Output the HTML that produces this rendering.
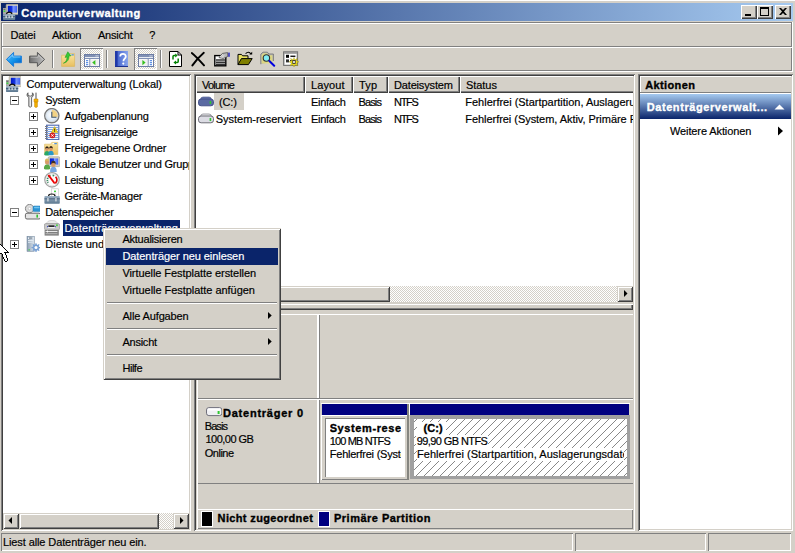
<!DOCTYPE html>
<html lang="de"><head><meta charset="utf-8"><title>Computerverwaltung</title>
<style>
html,body{margin:0;padding:0}
body{width:795px;height:553px;overflow:hidden;background:#D4D0C8;position:relative;font:11px/13px "Liberation Sans",sans-serif}
div,span.t,svg.i,i{position:absolute;display:block}
span.t{white-space:nowrap;height:13px;-webkit-text-stroke:.18px}
</style></head>
<body>
<svg width="0" height="0" style="position:absolute"><defs>
<linearGradient id="gScr" x1="0" y1="0" x2="1" y2="0"><stop offset="0" stop-color="#0018c8"/><stop offset=".45" stop-color="#1838e0"/><stop offset=".55" stop-color="#7a98ff"/><stop offset="1" stop-color="#4060f0"/></linearGradient>
<linearGradient id="gBack" x1="0" y1="0" x2="1" y2="1"><stop offset="0" stop-color="#58c0ff"/><stop offset=".55" stop-color="#1090e8"/><stop offset="1" stop-color="#0058c0"/></linearGradient>
<linearGradient id="gFwd" x1="0" y1="0" x2="1" y2="0"><stop offset="0" stop-color="#6e6e6e"/><stop offset="1" stop-color="#c0c0c0"/></linearGradient>
<linearGradient id="gFold" x1="0" y1="0" x2="0" y2="1"><stop offset="0" stop-color="#fbe5a0"/><stop offset="1" stop-color="#e8c060"/></linearGradient>
<linearGradient id="gHelp" x1="0" y1="0" x2="1" y2="0"><stop offset="0" stop-color="#3858c8"/><stop offset="1" stop-color="#88a4ec"/></linearGradient>
<linearGradient id="gBox" x1="0" y1="0" x2="0" y2="1"><stop offset="0" stop-color="#9ab0c4"/><stop offset="1" stop-color="#5c7890"/></linearGradient>
<linearGradient id="gTow" x1="0" y1="0" x2="1" y2="0"><stop offset="0" stop-color="#8ca0b4"/><stop offset="1" stop-color="#dce4ec"/></linearGradient>
<linearGradient id="gWr" x1="0" y1="0" x2="1" y2="0"><stop offset="0" stop-color="#8a8a8a"/><stop offset=".5" stop-color="#f4f4f4"/><stop offset="1" stop-color="#9a9a9a"/></linearGradient>
<radialGradient id="gClk" cx=".45" cy=".45" r=".6"><stop offset="0" stop-color="#ffffff"/><stop offset="1" stop-color="#c8dcf0"/></radialGradient>
<clipPath id="cClk"><circle cx="7.8" cy="7.7" r="5.9"/></clipPath>
</defs></svg>
<div style="left:0px;top:0px;width:795px;height:1px;background:#FFFFFF"></div>
<div style="left:1px;top:3px;width:792px;height:18px;background:linear-gradient(to right,#0A246A,#A6CAF0)"></div>
<svg class="i" style="left:2px;top:4px" width="16" height="16" viewBox="0 0 16 16"><rect x="4.2" y="0.2" width="12.6" height="10.4" rx="1" fill="#d6d2c2" stroke="#a8a494" stroke-width=".7"/><rect x="5.800000000000001" y="1.8" width="9.399999999999999" height="6.800000000000001" fill="url(#gScr)"/><rect x="1" y="4" width="3" height="6.5" fill="#a8a8a8"/><rect x="1.5" y="6.5" width="1.8" height="1.4" fill="#30e030"/><rect x="1.5" y="4.8" width="1.8" height="1" fill="#606060"/><path d="M4.5 10.3q0-2.2 2.7-2.2q2.7 0 2.7 2.2" fill="none" stroke="#101010" stroke-width="1.2"/><rect x="1" y="10.2" width="12.2" height="5.7" rx=".6" fill="url(#gBox)"/><rect x="1" y="12" width="12.2" height=".9" fill="#405872"/><rect x="3.6" y="11.6" width="1" height="2.4" fill="#fff"/><rect x="6.6" y="11.6" width="1" height="2.4" fill="#fff"/><rect x="9.6" y="11.6" width="1" height="2.4" fill="#fff"/></svg>
<span id="t1" class="t" style="left:21.3px;top:7px;color:#fff;font-weight:bold;-webkit-text-stroke:.35px;letter-spacing:0.523px;">Computerverwaltung</span>
<div style="left:741px;top:5px;width:16px;height:14px;background:#D4D0C8;box-shadow:inset 1px 1px 0 #FFFFFF,inset -1px -1px 0 #404040,inset -2px -2px 0 #808080"><i style="left:4px;top:9px;width:6px;height:2px;background:#000"></i></div>
<div style="left:757px;top:5px;width:16px;height:14px;background:#D4D0C8;box-shadow:inset 1px 1px 0 #FFFFFF,inset -1px -1px 0 #404040,inset -2px -2px 0 #808080"><i style="left:3px;top:2px;width:9px;height:9px;box-sizing:border-box;border:1px solid #000;border-top-width:2px"></i></div>
<div style="left:775px;top:5px;width:16px;height:14px;background:#D4D0C8;box-shadow:inset 1px 1px 0 #FFFFFF,inset -1px -1px 0 #404040,inset -2px -2px 0 #808080"><svg class="i" style="left:4px;top:3px" width="8" height="7" viewBox="0 0 8 7"><path d="M0 0h2l2 2l2-2h2l-3 3.5l3 3.5h-2l-2-2l-2 2h-2l3-3.5z" fill="#000"/></svg></div>
<div style="left:1px;top:22px;width:792px;height:1px;background:#808080"></div>
<div style="left:2px;top:23px;width:790px;height:1px;background:#FFFFFF"></div>
<div style="left:1px;top:22px;width:1px;height:49px;background:#808080"></div>
<div style="left:2px;top:23px;width:1px;height:48px;background:#FFFFFF"></div>
<div style="left:791px;top:22px;width:1px;height:49px;background:#808080"></div>
<div style="left:792px;top:22px;width:1px;height:50px;background:#FFFFFF"></div>
<div style="left:1px;top:46px;width:791px;height:1px;background:#808080"></div>
<div style="left:2px;top:47px;width:790px;height:1px;background:#FFFFFF"></div>
<div style="left:1px;top:70px;width:791px;height:1px;background:#808080"></div>
<div style="left:1px;top:71px;width:792px;height:1px;background:#FFFFFF"></div>
<span id="t2" class="t" style="left:10.5px;top:29px;color:#000;letter-spacing:-0.120px;">Datei</span>
<span id="t3" class="t" style="left:52px;top:29px;color:#000;letter-spacing:-0.234px;">Aktion</span>
<span id="t4" class="t" style="left:98px;top:29px;color:#000;letter-spacing:-0.229px;">Ansicht</span>
<span id="t5" class="t" style="left:149.3px;top:29px;color:#000;">?</span>
<svg class="i" style="left:6px;top:51px" width="16" height="16" viewBox="0 0 16 16"><path d="M.4 8.4L7.6 1.4V5.1H15.4V11.7H7.6V15.4Z" fill="url(#gBack)" stroke="#1c7cd8" stroke-width="1" stroke-linejoin="round"/><path d="M2.2 8.2L6.8 3.8V6H14.4" fill="none" stroke="#9ad8ff" stroke-width=".9" opacity=".8"/></svg>
<svg class="i" style="left:29px;top:51px" width="16" height="16" viewBox="0 0 16 16"><path d="M15.6 8.4L8.4 1.4V5.1H.6V11.7H8.4V15.4Z" fill="url(#gFwd)" stroke="#585858" stroke-width="1" stroke-linejoin="round"/><path d="M1.6 6.2H9.2V4L13.6 8.3" fill="none" stroke="#d8d8d8" stroke-width=".8" opacity=".7"/></svg>
<div style="left:52px;top:50px;width:1px;height:18px;background:#808080"></div>
<div style="left:53px;top:50px;width:1px;height:18px;background:#FFFFFF"></div>
<svg class="i" style="left:61px;top:51px" width="16" height="16" viewBox="0 0 16 16"><path d="M.6 4.2H8l1-1.6h4.6V15.4H.6Z" fill="url(#gFold)" stroke="#d8b458" stroke-width=".6"/><rect x="10" y="3.2" width="3" height="1.2" rx=".6" fill="#4a90e0"/><rect x="9.2" y="3.3" width="1.2" height="1" fill="#fff"/><path d="M2.4 12.2c2.6-1 3.6-3.4 3.6-6.2L4 6.4 6.8.8l3.2 4-2 .2c.2 3.4-1.6 6.4-5.6 7.2z" fill="#38c838" stroke="#189818" stroke-width=".5"/></svg>
<div style="left:80px;top:48px;width:23px;height:22px;background-image:conic-gradient(#fff 25%,#D4D0C8 0 50%,#fff 0 75%,#D4D0C8 0);background-size:2px 2px;box-shadow:inset 1px 1px 0 #808080,inset -1px -1px 0 #FFFFFF"></div>
<svg class="i" style="left:84px;top:52px" width="16" height="16" viewBox="0 0 16 16"><rect x=".5" y="2.5" width="15" height="12" fill="#fff" stroke="#6c7ca4" stroke-width="1"/><rect x="1" y="3" width="14" height="2" fill="#8090b4"/><rect x="1" y="5" width="14" height="1" fill="#e8ecf4"/><rect x="1" y="6" width="14" height="1" fill="#8090b4"/><rect x="11.6" y="3.4" width="1" height="1" fill="#fff"/><rect x="13.4" y="3.4" width="1" height="1" fill="#fff"/><rect x="5.4" y="7" width="1" height="7" fill="#6c7ca4"/><rect x="2" y="8.2" width="2.2" height="1" fill="#3878e0"/><rect x="2" y="10.2" width="2.2" height="1" fill="#3878e0"/><rect x="2" y="12.2" width="2.2" height="1" fill="#3878e0"/><rect x="6.6" y="7.4" width="8" height="6.4" fill="#f0f0f0"/><path d="M11.4 8L8.2 10.6L11.4 13.2Z" fill="#38c020"/></svg>
<div style="left:106px;top:50px;width:1px;height:18px;background:#808080"></div>
<div style="left:107px;top:50px;width:1px;height:18px;background:#FFFFFF"></div>
<svg class="i" style="left:115px;top:51px" width="16" height="16" viewBox="0 0 16 16"><rect x="0" y="0" width="13" height="16" fill="url(#gHelp)"/><rect x="0" y="0" width="2.6" height="16" fill="#2038a8"/><rect x="0" y="15" width="13" height="1" fill="#1c3090"/><path d="M5.2 5.4c0-3.4 5.6-3.4 5.6 0c0 2.2-2.4 2.4-2.4 4.8" fill="none" stroke="#fff" stroke-width="1.7"/><circle cx="8.3" cy="12.6" r="1.1" fill="#fff"/></svg>
<div style="left:134px;top:48px;width:23px;height:22px;background-image:conic-gradient(#fff 25%,#D4D0C8 0 50%,#fff 0 75%,#D4D0C8 0);background-size:2px 2px;box-shadow:inset 1px 1px 0 #808080,inset -1px -1px 0 #FFFFFF"></div>
<svg class="i" style="left:138px;top:52px" width="16" height="16" viewBox="0 0 16 16"><rect x=".5" y="2.5" width="15" height="12" fill="#fff" stroke="#6c7ca4" stroke-width="1"/><rect x="1" y="3" width="14" height="2" fill="#8090b4"/><rect x="1" y="5" width="14" height="1" fill="#e8ecf4"/><rect x="1" y="6" width="14" height="1" fill="#8090b4"/><rect x="11.6" y="3.4" width="1" height="1" fill="#fff"/><rect x="13.4" y="3.4" width="1" height="1" fill="#fff"/><rect x="9.6" y="7" width="1" height="7" fill="#6c7ca4"/><rect x="11.8" y="8.2" width="2.2" height="1" fill="#3878e0"/><rect x="11.8" y="10.2" width="2.2" height="1" fill="#3878e0"/><rect x="11.8" y="12.2" width="2.2" height="1" fill="#3878e0"/><rect x="1.4" y="7.4" width="8" height="6.4" fill="#f0f0f0"/><path d="M4.4 8L7.6 10.6L4.4 13.2Z" fill="#38c020"/></svg>
<div style="left:160px;top:50px;width:1px;height:18px;background:#808080"></div>
<div style="left:161px;top:50px;width:1px;height:18px;background:#FFFFFF"></div>
<svg class="i" style="left:168px;top:51px" width="16" height="16" viewBox="0 0 16 16"><path d="M1.5.5H10L13.5 4V15.5H1.5Z" fill="#fff" stroke="#000" stroke-width="1"/><path d="M10 .5V4H13.5" fill="none" stroke="#000" stroke-width="1"/><path d="M5 8.4V5.6Q5 4.6 6 4.6H7.4" fill="none" stroke="#008000" stroke-width="1.5"/><path d="M7.2 2.6L9.8 4.6L7.2 6.6Z" fill="#008000"/><path d="M10.2 7.6V10.4Q10.2 11.4 9.2 11.4H7.8" fill="none" stroke="#008000" stroke-width="1.5"/><path d="M8 9.4L5.4 11.4L8 13.4Z" fill="#008000"/></svg>
<svg class="i" style="left:191px;top:51px" width="16" height="16" viewBox="0 0 16 16"><path d="M.8 2Q5 5.4 13 14.4M12.8 1.8Q6 7.6 1.4 14.4" fill="none" stroke="#000" stroke-width="1.9" stroke-linecap="round"/></svg>
<svg class="i" style="left:214px;top:51px" width="16" height="16" viewBox="0 0 16 16"><rect x=".8" y="4.6" width="11" height="10.2" fill="#fff" stroke="#000" stroke-width="1.4"/><rect x="2" y="8.4" width="9" height="1.2" fill="#000"/><rect x="2" y="10.6" width="9" height="1.2" fill="#000"/><rect x="2" y="12.6" width="9" height="1.2" fill="#000"/><path d="M5 6.6L8.4 2.4L13.6 1.6L13.8 5.4L9.4 7.6Z" fill="#b8b8b8" stroke="#404040" stroke-width=".7"/><path d="M6 6L9 3.4M7.4 6.8L10.4 4.2" stroke="#fff" stroke-width=".7"/><rect x="14.4" y="1.6" width="1.2" height="4.2" fill="#0000c0"/></svg>
<svg class="i" style="left:237px;top:51px" width="16" height="16" viewBox="0 0 16 16"><path d="M1 13.6V3.4H4.4L5.6 4.8H11V7.4" fill="#e8e060" stroke="#000" stroke-width="1"/><path d="M1 13.6L4.4 7.6H15.2L11.4 13.6Z" fill="#808000" stroke="#000" stroke-width="1" stroke-linejoin="round"/><path d="M8.6 2.6Q11.6 -.4 14 3" fill="none" stroke="#000" stroke-width="1.1"/><path d="M12.4 3.6H15.2V.8Z" fill="#000"/></svg>
<svg class="i" style="left:260px;top:51px" width="16" height="16" viewBox="0 0 16 16"><path d="M.8 13.2V3.2L3 1.2H7.4L9 3H13.4V10" fill="#b8b8b8" stroke="#707070" stroke-width=".8"/><path d="M1.6 12.6V4L3.4 2.2H6.8L8.4 4.2H12.4V12.6Z" fill="#e8e070" opacity=".75"/><circle cx="6.4" cy="7" r="3.2" fill="#80ecf4" stroke="#303030" stroke-width="1.1"/><path d="M9.4 10L14.2 14.8" stroke="#0000e0" stroke-width="2" stroke-linecap="round"/></svg>
<svg class="i" style="left:283px;top:51px" width="16" height="16" viewBox="0 0 16 16"><rect x=".6" y=".8" width="14" height="13.6" fill="#d0d0d0" stroke="#707070" stroke-width="1"/><rect x="1" y="1.2" width="13.2" height="1.4" fill="#909090"/><rect x="2" y="3" width="11.2" height="10.4" fill="#fff"/><rect x="3" y="3.8" width="3" height="3" fill="#000"/><rect x="7.4" y="4.6" width="5" height="1.3" fill="#000"/><rect x="3" y="8.4" width="3" height="3" fill="#303030"/><rect x="7" y="9" width="3" height="1.2" fill="#303030"/><path d="M11 6.4L11.8 9L14.4 7.4L13.4 10L16 10.8L13.6 12L14.8 14.8L12 13.6L11 16L10 13.6L7.2 14.8L8.4 12L6 10.8L8.6 10L7.6 7.4L10.2 9Z" fill="#f4e410" stroke="#8c8000" stroke-width=".35"/><rect x="9.8" y="9.4" width="2.4" height="3" fill="#fff" stroke="#202020" stroke-width=".8"/></svg>
<div style="left:1px;top:74px;width:190px;height:457px;background:#FFFFFF;box-shadow:inset 1px 1px 0 #808080,inset -1px -1px 0 #FFFFFF,inset 2px 2px 0 #404040,inset -2px -2px 0 #D4D0C8"></div>
<svg class="i" style="left:5px;top:76px" width="16" height="16" viewBox="0 0 16 16"><rect x="4.2" y="0.2" width="12.6" height="10.4" rx="1" fill="#d6d2c2" stroke="#a8a494" stroke-width=".7"/><rect x="5.800000000000001" y="1.8" width="9.399999999999999" height="6.800000000000001" fill="url(#gScr)"/><rect x="1" y="4" width="3" height="6.5" fill="#a8a8a8"/><rect x="1.5" y="6.5" width="1.8" height="1.4" fill="#30e030"/><rect x="1.5" y="4.8" width="1.8" height="1" fill="#606060"/><path d="M4.5 10.3q0-2.2 2.7-2.2q2.7 0 2.7 2.2" fill="none" stroke="#101010" stroke-width="1.2"/><rect x="1" y="10.2" width="12.2" height="5.7" rx=".6" fill="url(#gBox)"/><rect x="1" y="12" width="12.2" height=".9" fill="#405872"/><rect x="3.6" y="11.6" width="1" height="2.4" fill="#fff"/><rect x="6.6" y="11.6" width="1" height="2.4" fill="#fff"/><rect x="9.6" y="11.6" width="1" height="2.4" fill="#fff"/></svg>
<span id="t6" class="t" style="left:26.4px;top:78px;color:#000;letter-spacing:-0.107px;">Computerverwaltung (Lokal)</span>
<div style="left:10px;top:96px;width:9px;height:9px;box-sizing:border-box;border:1px solid #808080;background:#fff"><i style="left:1px;top:3px;width:5px;height:1px;background:#000"></i></div>
<svg class="i" style="left:24px;top:92px" width="16" height="16" viewBox="0 0 16 16"><path transform="translate(.8 0)" d="M3.2.8C1.6 2 2 4.6 4 5.4V14.4Q5.4 16 6.8 14.4V5.4C8.8 4.6 9.2 2 7.6.8V3.4L5.4 4.2L3.2 3.4Z" fill="url(#gWr)" stroke="#5c5c5c" stroke-width=".9"/><rect x="11.4" y=".6" width="1.2" height="6.8" fill="#707070"/><path d="M10 7H14V9.6L13.4 10.4V14.8Q12 16.4 10.6 14.8V10.4L10 9.6Z" fill="#f4b000" stroke="#c08000" stroke-width=".5"/><rect x="10.4" y="9.6" width="3.2" height=".8" fill="#c88800"/></svg>
<span id="t7" class="t" style="left:45.3px;top:94px;color:#000;letter-spacing:-0.315px;">System</span>
<div style="left:29px;top:112px;width:9px;height:9px;box-sizing:border-box;border:1px solid #808080;background:#fff"><i style="left:1px;top:3px;width:5px;height:1px;background:#000"></i><i style="left:3px;top:1px;width:1px;height:5px;background:#000"></i></div>
<svg class="i" style="left:44px;top:108px" width="16" height="16" viewBox="0 0 16 16"><circle cx="7.8" cy="7.7" r="7.1" fill="url(#gClk)" stroke="#787878" stroke-width="1.4"/><circle cx="7.8" cy="7.7" r="6" fill="none" stroke="#d4d8dc" stroke-width=".7"/><path d="M7.8 9.2V-2H20V9.2Z" fill="#f2d284" clip-path="url(#cClk)"/><path d="M7.8 3.8V9.2H12.4" fill="none" stroke="#3c5470" stroke-width="1.1"/></svg>
<span id="t8" class="t" style="left:64.5px;top:110px;color:#000;letter-spacing:-0.132px;">Aufgabenplanung</span>
<div style="left:29px;top:128px;width:9px;height:9px;box-sizing:border-box;border:1px solid #808080;background:#fff"><i style="left:1px;top:3px;width:5px;height:1px;background:#000"></i><i style="left:3px;top:1px;width:1px;height:5px;background:#000"></i></div>
<svg class="i" style="left:44px;top:124px" width="16" height="16" viewBox="0 0 16 16"><rect x="2.6" y="1.2" width="12.2" height="14.4" fill="#f4f8ff" stroke="#4c68b0" stroke-width="1.1"/><path d="M3.4 3.5H14.2M3.4 5.5H14.2M3.4 7.5H14.2M3.4 9.5H14.2M3.4 11.5H14.2M3.4 13.5H14.2" stroke="#7ca4e4" stroke-width="1"/><path d="M1 2.5H3.8M1 4.5H3.8M1 6.5H3.8M1 8.5H3.8M1 10.5H3.8M1 12.5H3.8M1 14.5H3.8" stroke="#787880" stroke-width="1"/><path d="M10.6 2.6L13.8 8.6H7.4Z" fill="#f8d820" stroke="#c8a000" stroke-width=".5"/><rect x="10.2" y="4.6" width=".9" height="2.2" fill="#202020"/><rect x="10.2" y="7.2" width=".9" height=".8" fill="#202020"/><circle cx="8.4" cy="11.4" r="2.7" fill="#e02020" stroke="#a81010" stroke-width=".4"/><path d="M7.2 10.2L9.6 12.6M9.6 10.2L7.2 12.6" stroke="#fff" stroke-width=".9"/></svg>
<span id="t9" class="t" style="left:64.5px;top:126px;color:#000;letter-spacing:-0.355px;">Ereignisanzeige</span>
<div style="left:29px;top:144px;width:9px;height:9px;box-sizing:border-box;border:1px solid #808080;background:#fff"><i style="left:1px;top:3px;width:5px;height:1px;background:#000"></i><i style="left:3px;top:1px;width:1px;height:5px;background:#000"></i></div>
<svg class="i" style="left:44px;top:140px" width="16" height="16" viewBox="0 0 16 16"><path d="M.6 4.2H6.6L7.8 2.4H13.8V14.6H.6Z" fill="url(#gFold)" stroke="#dcb860" stroke-width=".6"/><rect x="10" y="3" width="3" height="1.2" rx=".6" fill="#4a90e0"/><rect x="8.6" y="3" width="1.6" height="1.1" fill="#fff"/><path d="M0.2799999999999998 15.04Q0.2799999999999998 10.96 3 10.96Q5.720000000000001 10.96 5.720000000000001 15.04Q3 16.06 0.2799999999999998 15.04Z" fill="#28a868"/><ellipse cx="3" cy="9.09" rx="1.785" ry="2.21" fill="#d89a68"/><path d="M1.13 8.75Q1.3 6.2 3 6.2Q4.87 6.2 4.87 8.75Q3 7.390000000000001 1.13 8.75Z" fill="#282018"/><path d="M4.279999999999999 14.84Q4.279999999999999 10.76 7 10.76Q9.72 10.76 9.72 14.84Q7 15.86 4.279999999999999 14.84Z" fill="#2898c8"/><ellipse cx="7" cy="8.89" rx="1.785" ry="2.21" fill="#d89a68"/><path d="M5.13 8.55Q5.3 6 7 6Q8.870000000000001 6 8.870000000000001 8.55Q7 7.1899999999999995 5.13 8.55Z" fill="#282018"/></svg>
<span id="t10" class="t" style="left:64.5px;top:142px;color:#000;letter-spacing:-0.182px;">Freigegebene Ordner</span>
<div style="left:29px;top:160px;width:9px;height:9px;box-sizing:border-box;border:1px solid #808080;background:#fff"><i style="left:1px;top:3px;width:5px;height:1px;background:#000"></i><i style="left:3px;top:1px;width:1px;height:5px;background:#000"></i></div>
<svg class="i" style="left:44px;top:156px" width="16" height="16" viewBox="0 0 16 16"><rect x="4.2" y="0.8" width="11.6" height="9.8" rx="1" fill="#d6d2c2" stroke="#a8a494" stroke-width=".7"/><rect x="5.800000000000001" y="2.4000000000000004" width="8.399999999999999" height="6.200000000000001" fill="url(#gScr)"/><path d="M-0.20000000000000018 13.0Q-0.20000000000000018 8.2 3 8.2Q6.2 8.2 6.2 13.0Q3 14.2 -0.20000000000000018 13.0Z" fill="#58a848"/><ellipse cx="3" cy="6.0" rx="2.1" ry="2.6" fill="#d89a68"/><path d="M0.7999999999999998 5.6Q1.0 2.6 3 2.6Q5.2 2.6 5.2 5.6Q3 4.0 0.7999999999999998 5.6Z" fill="#d8b860"/><path d="M6.04 15.720000000000002Q6.04 10.68 9.4 10.68Q12.760000000000002 10.68 12.760000000000002 15.720000000000002Q9.4 16.98 6.04 15.720000000000002Z" fill="#78a8e0"/><ellipse cx="9.4" cy="8.37" rx="2.205" ry="2.7300000000000004" fill="#d89a68"/><path d="M7.09 7.95Q7.300000000000001 4.8 9.4 4.8Q11.71 4.8 11.71 7.95Q9.4 6.27 7.09 7.95Z" fill="#403020"/></svg>
<span id="t11" class="t" style="left:64.5px;top:158px;color:#000;letter-spacing:-0.203px;width:124px;overflow:hidden;">Lokale Benutzer und Gruppen</span>
<div style="left:29px;top:176px;width:9px;height:9px;box-sizing:border-box;border:1px solid #808080;background:#fff"><i style="left:1px;top:3px;width:5px;height:1px;background:#000"></i><i style="left:3px;top:1px;width:1px;height:5px;background:#000"></i></div>
<svg class="i" style="left:44px;top:172px" width="16" height="16" viewBox="0 0 16 16"><circle cx="8" cy="7.8" r="7.2" fill="#fcfcfc" stroke="#a4a4a4" stroke-width="1.3"/><circle cx="8" cy="7.8" r="6" fill="none" stroke="#e0e0e0" stroke-width=".8"/><path d="M4.2 10.8A4.8 4.8 0 0 1 6.6 3.6" fill="none" stroke="#3c8c64" stroke-width="1.6" stroke-dasharray="1.1 .8"/><path d="M8.6 3.4A4.8 4.8 0 0 1 10.2 3.8" fill="none" stroke="#3c8c64" stroke-width="1.6"/><path d="M11.6 4.8A4.8 4.8 0 0 1 11.8 10.8L9.6 11" fill="none" stroke="#e00000" stroke-width="1.6"/><path d="M4.4 3L10.2 10.8" stroke="#f00000" stroke-width="1.9"/></svg>
<span id="t12" class="t" style="left:64.5px;top:174px;color:#000;letter-spacing:-0.327px;">Leistung</span>
<svg class="i" style="left:44px;top:188px" width="16" height="16" viewBox="0 0 16 16"><rect x="7.6" y=".8" width="6.8" height="7.6" fill="#fff" stroke="#c4c4c4" stroke-width=".6"/><rect x="10" y="2.4" width="2" height="1.8" rx=".6" fill="#40d040"/><rect x="10" y="4.2" width="2.2" height="4" fill="#e4e4e4"/><path d="M4.6 8q0-2 3.2-2q3.2 0 3.2 2" fill="none" stroke="#101010" stroke-width="1.2"/><rect x=".4" y="8" width="15.4" height="7.8" rx=".8" fill="url(#gBox)"/><rect x=".4" y="10.4" width="15.4" height=".9" fill="#48607a"/><rect x="3.4" y="10" width="1.1" height="3.4" fill="#f0f0f0"/><rect x="11.4" y="10" width="1.1" height="3.4" fill="#f0f0f0"/></svg>
<span id="t13" class="t" style="left:64.5px;top:190px;color:#000;letter-spacing:-0.208px;">Geräte-Manager</span>
<div style="left:10px;top:208px;width:9px;height:9px;box-sizing:border-box;border:1px solid #808080;background:#fff"><i style="left:1px;top:3px;width:5px;height:1px;background:#000"></i></div>
<svg class="i" style="left:24px;top:204px" width="16" height="16" viewBox="0 0 16 16"><circle cx="5.6" cy="4.6" r="4.2" fill="#dcdcdc" stroke="#7c7c7c" stroke-width=".9"/><circle cx="5.6" cy="4.6" r="1.3" fill="#fff" stroke="#a8a8a8" stroke-width=".5"/><rect x="9" y="2" width="7.6" height="5.6" rx="1.2" fill="#2c94d4" stroke="#1c78b4" stroke-width=".5"/><rect x="10" y="2.8" width="5.6" height="1.4" rx=".6" fill="#70c4f0"/><rect x="1.4" y="9.2" width="15.2" height="5.8" rx="1.6" fill="#e4e4e4" stroke="#686868" stroke-width="1"/><rect x="12.4" y="10.6" width="1.6" height="3" fill="#30c030"/></svg>
<span id="t14" class="t" style="left:45.3px;top:206px;color:#000;letter-spacing:-0.194px;">Datenspeicher</span>
<svg class="i" style="left:44px;top:220px" width="16" height="16" viewBox="0 0 16 16"><path d="M2.4 4Q3 .4 8 .4Q13 .4 13.6 4Z" fill="#ececec" stroke="#b4b4b4" stroke-width=".5"/><rect x=".4" y="3.6" width="15.2" height="6.2" rx="1.4" fill="#c8c8c8" stroke="#8c8c8c" stroke-width=".6"/><rect x="4.4" y="5.4" width="6" height="1.5" fill="#181818"/><rect x="3.6" y="7" width="7.6" height=".9" fill="#f4f4f4"/><rect x="12.2" y="4.4" width="1.5" height="1.8" fill="#30d030"/><rect x="3" y="6.2" width="1" height="1" fill="#2030c0"/><rect x="10.8" y="6.2" width="1" height="1" fill="#2030c0"/><rect x=".6" y="10" width="14.2" height="5.6" fill="#808080"/><rect x="1.6" y="11" width="11.8" height="1" fill="#e8e8e8"/><rect x="1.6" y="13.2" width="11.8" height="1" fill="#b8b8b8"/><rect x="3" y="10.6" width="1" height="1.8" fill="#fff"/></svg>
<div style="left:63px;top:220px;width:117px;height:16px;background:#0A246A"></div>
<span id="t15" class="t" style="left:64.5px;top:222px;color:#fff;letter-spacing:0.106px;">Datenträgerverwaltung</span>
<div style="left:10px;top:240px;width:9px;height:9px;box-sizing:border-box;border:1px solid #808080;background:#fff"><i style="left:1px;top:3px;width:5px;height:1px;background:#000"></i><i style="left:3px;top:1px;width:1px;height:5px;background:#000"></i></div>
<svg class="i" style="left:24px;top:236px" width="16" height="16" viewBox="0 0 16 16"><rect x="3" y=".2" width="7.4" height="15.2" fill="url(#gTow)" stroke="#6c8098" stroke-width=".5"/><rect x="4" y="1.4" width="5.4" height="1.6" fill="#e8f0f8"/><rect x="5" y="1.7" width="3.4" height=".7" fill="#283848"/><rect x="4" y="4" width="5.4" height="1.2" fill="#e0e8f0"/><rect x="4" y="6" width="5.4" height="1" fill="#d0dce8"/><rect x="4.4" y="13.4" width="1.6" height="1" fill="#40d040"/><polygon points="16.47,11.11 16.47,12.09 14.98,12.46 14.72,13.09 15.51,14.41 14.81,15.11 13.49,14.32 12.86,14.58 12.49,16.07 11.51,16.07 11.14,14.58 10.51,14.32 9.19,15.11 8.49,14.41 9.28,13.09 9.02,12.46 7.53,12.09 7.53,11.11 9.02,10.74 9.28,10.11 8.49,8.79 9.19,8.09 10.51,8.88 11.14,8.62 11.51,7.13 12.49,7.13 12.86,8.62 13.49,8.88 14.81,8.09 15.51,8.79 14.72,10.11 14.98,10.74" fill="#78a0d4"/><circle cx="12" cy="11.6" r="1.5" fill="#fff"/></svg>
<span id="t16" class="t" style="left:45.3px;top:238px;color:#000;">Dienste und Anwendungen</span>
<div style="left:3px;top:513px;width:186px;height:16px;background-image:conic-gradient(#fff 25%,#D4D0C8 0 50%,#fff 0 75%,#D4D0C8 0);background-size:2px 2px;"></div>
<div style="left:3px;top:513px;width:16px;height:16px;background:#D4D0C8;box-shadow:inset 1px 1px 0 #D4D0C8,inset -1px -1px 0 #404040,inset 2px 2px 0 #FFFFFF,inset -2px -2px 0 #808080"><svg class="i" style="left:0;top:0" width="16" height="16"><polygon points="9,4 9,11 5.5,7.5" fill="#000"/></svg></div>
<div style="left:173px;top:513px;width:16px;height:16px;background:#D4D0C8;box-shadow:inset 1px 1px 0 #D4D0C8,inset -1px -1px 0 #404040,inset 2px 2px 0 #FFFFFF,inset -2px -2px 0 #808080"><svg class="i" style="left:0;top:0" width="16" height="16"><polygon points="7,4 7,11 10.5,7.5" fill="#000"/></svg></div>
<div style="left:19px;top:513px;width:140px;height:16px;background:#D4D0C8;box-shadow:inset 1px 1px 0 #D4D0C8,inset -1px -1px 0 #404040,inset 2px 2px 0 #FFFFFF,inset -2px -2px 0 #808080"></div>
<div style="left:194px;top:74px;width:441px;height:457px;background:#D4D0C8;box-shadow:inset 1px 1px 0 #808080,inset -1px -1px 0 #FFFFFF,inset 2px 2px 0 #404040,inset -2px -2px 0 #D4D0C8"></div>
<div style="left:196px;top:76px;width:437px;height:226px;background:#fff"></div>
<div style="left:196px;top:76px;width:109px;height:17px;background:#D4D0C8;box-shadow:inset 1px 1px 0 #FFFFFF,inset -1px -1px 0 #404040,inset -2px -2px 0 #808080"></div>
<span id="t17" class="t" style="left:202px;top:79px;color:#000;letter-spacing:-0.758px;">Volume</span>
<div style="left:305px;top:76px;width:48px;height:17px;background:#D4D0C8;box-shadow:inset 1px 1px 0 #FFFFFF,inset -1px -1px 0 #404040,inset -2px -2px 0 #808080"></div>
<span id="t18" class="t" style="left:311px;top:79px;color:#000;letter-spacing:0.095px;">Layout</span>
<div style="left:353px;top:76px;width:35px;height:17px;background:#D4D0C8;box-shadow:inset 1px 1px 0 #FFFFFF,inset -1px -1px 0 #404040,inset -2px -2px 0 #808080"></div>
<span id="t19" class="t" style="left:359px;top:79px;color:#000;letter-spacing:0.135px;">Typ</span>
<div style="left:388px;top:76px;width:72px;height:17px;background:#D4D0C8;box-shadow:inset 1px 1px 0 #FFFFFF,inset -1px -1px 0 #404040,inset -2px -2px 0 #808080"></div>
<span id="t20" class="t" style="left:394px;top:79px;color:#000;letter-spacing:-0.162px;">Dateisystem</span>
<div style="left:460px;top:76px;width:173px;height:17px;background:#D4D0C8;box-shadow:inset 1px 1px 0 #FFFFFF,inset 0 -1px 0 #404040,inset 0 -2px 0 #808080"></div>
<span id="t21" class="t" style="left:466px;top:79px;color:#000;letter-spacing:-0.057px;">Status</span>
<div style="left:214px;top:93px;width:30px;height:17px;background:#D4D0C8"></div>
<svg class="i" style="left:198px;top:94px" width="16" height="16" viewBox="0 0 16 16"><path d="M2.4 5.4Q3 3 5 3H11Q13 3 13.6 5.4Z" fill="#6a7ab0" stroke="#3e4c84" stroke-width=".6"/><rect x=".5" y="5" width="15" height="6.8" rx="2.6" fill="#5a6aa2" stroke="#3e4c84" stroke-width=".9"/><rect x="11.6" y="7" width="1.6" height="3" fill="#30c830"/></svg>
<span id="t22" class="t" style="left:219px;top:96px;color:#000;letter-spacing:-0.142px;">(C:)</span>
<svg class="i" style="left:198px;top:111px" width="16" height="16" viewBox="0 0 16 16"><path d="M2.4 5.4Q3 3 5 3H11Q13 3 13.6 5.4Z" fill="#f0f0f4" stroke="#60606a" stroke-width=".6"/><rect x=".5" y="5" width="15" height="6.8" rx="2.6" fill="#dcdce4" stroke="#60606a" stroke-width=".9"/><rect x="11.6" y="7" width="1.6" height="3" fill="#30c830"/></svg>
<span id="t23" class="t" style="left:215.8px;top:113px;color:#000;letter-spacing:-0.024px;">System-reserviert</span>
<span id="t24" class="t" style="left:311px;top:96px;color:#000;letter-spacing:-0.298px;">Einfach</span>
<span id="t25" class="t" style="left:358.4px;top:96px;color:#000;letter-spacing:-0.850px;">Basis</span>
<span id="t26" class="t" style="left:394px;top:96px;color:#000;letter-spacing:-1.306px;">NTFS</span>
<span id="t27" class="t" style="left:311px;top:113px;color:#000;letter-spacing:-0.298px;">Einfach</span>
<span id="t28" class="t" style="left:358.4px;top:113px;color:#000;letter-spacing:-0.850px;">Basis</span>
<span id="t29" class="t" style="left:394px;top:113px;color:#000;letter-spacing:-1.306px;">NTFS</span>
<span id="t30" class="t" style="left:465.3px;top:96px;color:#000;letter-spacing:-0.016px;width:167.7px;overflow:hidden;">Fehlerfrei (Startpartition, Auslagerungsdatei, Absturzabbild, Primäre Partition)</span>
<span id="t31" class="t" style="left:465.3px;top:113px;color:#000;letter-spacing:-0.049px;width:167.7px;overflow:hidden;">Fehlerfrei (System, Aktiv, Primäre Partition)</span>
<div style="left:196px;top:286px;width:437px;height:16px;background-image:conic-gradient(#fff 25%,#D4D0C8 0 50%,#fff 0 75%,#D4D0C8 0);background-size:2px 2px;"></div>
<div style="left:196px;top:286px;width:16px;height:16px;background:#D4D0C8;box-shadow:inset 1px 1px 0 #D4D0C8,inset -1px -1px 0 #404040,inset 2px 2px 0 #FFFFFF,inset -2px -2px 0 #808080"><svg class="i" style="left:0;top:0" width="16" height="16"><polygon points="9,4 9,11 5.5,7.5" fill="#000"/></svg></div>
<div style="left:617px;top:286px;width:16px;height:16px;background:#D4D0C8;box-shadow:inset 1px 1px 0 #D4D0C8,inset -1px -1px 0 #404040,inset 2px 2px 0 #FFFFFF,inset -2px -2px 0 #808080"><svg class="i" style="left:0;top:0" width="16" height="16"><polygon points="7,4 7,11 10.5,7.5" fill="#000"/></svg></div>
<div style="left:212px;top:286px;width:178px;height:16px;background:#D4D0C8;box-shadow:inset 1px 1px 0 #D4D0C8,inset -1px -1px 0 #404040,inset 2px 2px 0 #FFFFFF,inset -2px -2px 0 #808080"></div>
<div style="left:196px;top:304px;width:437px;height:6px;background:#D4D0C8;box-shadow:inset 0 1px 0 #FFFFFF,inset -1px -1px 0 #404040,inset -2px -2px 0 #808080"></div>
<div style="left:197px;top:314px;width:436px;height:1px;background:#FFFFFF"></div>
<div style="left:197px;top:314px;width:1px;height:215px;background:#FFFFFF"></div>
<div style="left:317px;top:315px;width:2px;height:169px;background:#FFFFFF"></div>
<div style="left:319px;top:315px;width:1px;height:169px;background:#808080"></div>
<div style="left:198px;top:398px;width:435px;height:1px;background:#808080"></div>
<div style="left:198px;top:399px;width:435px;height:1px;background:#FFFFFF"></div>
<div style="left:198px;top:483px;width:435px;height:1px;background:#808080"></div>
<svg class="i" style="left:206px;top:404px" width="16" height="16" viewBox="0 0 16 16"><rect x=".5" y="3.6" width="15.4" height="8" rx="2.4" fill="#f0f0f4" stroke="#70707c" stroke-width="1"/><rect x="1.6" y="4.6" width="13" height="2" rx="1" fill="#fff"/><rect x="11.6" y="7" width="2" height="3" fill="#30c830"/></svg>
<span id="t32" class="t" style="left:223px;top:407px;color:#000;font-weight:bold;-webkit-text-stroke:.35px;letter-spacing:0.765px;">Datenträger 0</span>
<span id="t33" class="t" style="left:204.8px;top:420px;color:#000;letter-spacing:-0.950px;">Basis</span>
<span id="t34" class="t" style="left:205.5px;top:433px;color:#000;letter-spacing:-0.524px;">100,00 GB</span>
<span id="t35" class="t" style="left:204.8px;top:447px;color:#000;letter-spacing:-0.499px;">Online</span>
<div style="left:321px;top:403px;width:309px;height:1px;background:#FFFFFF"></div>
<div style="left:322px;top:404px;width:85px;height:11px;background:#000080"></div>
<div style="left:321px;top:415px;width:87px;height:65px;background:#D4D0C8;box-shadow:inset 1px 1px 0 #FFFFFF,inset -1px -1px 0 #808080"></div>
<div style="left:325px;top:418px;width:80px;height:59px;background:#fff;box-shadow:inset 1px 1px 0 #808080,inset -1px -1px 0 #FFFFFF"></div>
<span id="t36" class="t" style="left:329.7px;top:422px;color:#000;font-weight:bold;-webkit-text-stroke:.35px;letter-spacing:0.597px;width:71.80000000000001px;overflow:hidden;">System-reserviert</span>
<span id="t37" class="t" style="left:329.8px;top:435px;color:#000;letter-spacing:-0.868px;">100 MB NTFS</span>
<span id="t38" class="t" style="left:329.8px;top:448px;color:#000;letter-spacing:-0.244px;width:71.69999999999999px;overflow:hidden;">Fehlerfrei (System, Aktiv, Primäre Partition)</span>
<div style="left:407px;top:404px;width:2px;height:76px;background:#858580"></div>
<div style="left:409px;top:404px;width:1px;height:11px;background:#FFFFFF"></div>
<div style="left:410px;top:404px;width:219px;height:11px;background:#000080"></div>
<div style="left:410px;top:415px;width:220px;height:64px;background:#A0A0A0"></div>
<div style="left:414px;top:419px;width:213px;height:57px;background:#fff"></div>
<svg class="i" style="left:414px;top:419px" width="213" height="57" shape-rendering="crispEdges"><defs><pattern id="hatch" width="8" height="8" patternUnits="userSpaceOnUse" x="3" y="0"><rect x="7" y="0" width="1" height="1" fill="#888888"/><rect x="6" y="1" width="1" height="1" fill="#888888"/><rect x="5" y="2" width="1" height="1" fill="#888888"/><rect x="4" y="3" width="1" height="1" fill="#888888"/><rect x="3" y="4" width="1" height="1" fill="#888888"/><rect x="2" y="5" width="1" height="1" fill="#888888"/><rect x="1" y="6" width="1" height="1" fill="#888888"/><rect x="0" y="7" width="1" height="1" fill="#888888"/></pattern></defs><rect width="213" height="57" fill="url(#hatch)"/></svg>
<span id="t39" class="t" style="left:423.6px;top:422px;color:#000;font-weight:bold;-webkit-text-stroke:.35px;letter-spacing:0.022px;background:#fff;padding:0 3px 0 7px;margin-left:-7px;">(C:)</span>
<span id="t40" class="t" style="left:416.8px;top:435px;color:#000;letter-spacing:-0.596px;background:#fff;padding:0 1px 0 1px;margin-left:-1px;">99,90 GB NTFS</span>
<span id="t41" class="t" style="left:417px;top:448px;color:#000;letter-spacing:0.045px;width:206.5px;overflow:hidden;background:#fff;">Fehlerfrei (Startpartition, Auslagerungsdatei, Absturzabbild, Primäre Partition)</span>
<div style="left:198px;top:509px;width:435px;height:20px;box-shadow:inset 0 1px 0 #FFFFFF,inset -1px -1px 0 #808080"></div>
<div style="left:202px;top:512px;width:10px;height:14px;background:#000;box-shadow:0 0 0 1px #fff"></div>
<span id="t42" class="t" style="left:217.6px;top:512px;color:#000;font-weight:bold;-webkit-text-stroke:.35px;letter-spacing:0.358px;">Nicht zugeordnet</span>
<div style="left:319px;top:512px;width:10px;height:14px;background:#000080;box-shadow:0 0 0 1px #fff"></div>
<span id="t43" class="t" style="left:334px;top:512px;color:#000;font-weight:bold;-webkit-text-stroke:.35px;letter-spacing:0.485px;">Primäre Partition</span>
<div style="left:638px;top:74px;width:155px;height:457px;background:#FFFFFF;box-shadow:inset 1px 1px 0 #808080,inset -1px -1px 0 #FFFFFF,inset 2px 2px 0 #404040,inset -2px -2px 0 #D4D0C8"></div>
<div style="left:640px;top:76px;width:151px;height:16px;background:#D4D0C8;box-shadow:inset 1px 1px 0 #FFFFFF"></div>
<div style="left:640px;top:92px;width:151px;height:1px;background:#808080"></div>
<div style="left:640px;top:93px;width:151px;height:1px;background:#FFFFFF"></div>
<span id="t44" class="t" style="left:645.3px;top:79px;color:#000;font-weight:bold;-webkit-text-stroke:.35px;letter-spacing:0.363px;">Aktionen</span>
<div style="left:640px;top:94px;width:151px;height:25px;background:linear-gradient(to bottom,#A6CAF0,#0A246A)"></div>
<span id="t45" class="t" style="left:646.7px;top:101px;color:#fff;font-weight:bold;-webkit-text-stroke:.35px;letter-spacing:0.579px;">Datenträgerverwalt...</span>
<svg class="i" style="left:774px;top:104px" width="11" height="6"><polygon points="0.5,5.5 5.5,0.5 10.5,5.5" fill="#fff"/></svg>
<span id="t46" class="t" style="left:670px;top:125px;color:#000;letter-spacing:-0.111px;">Weitere Aktionen</span>
<svg class="i" style="left:778px;top:126px" width="6" height="10"><polygon points="0,0.5 0,9.5 5,5" fill="#000"/></svg>
<div style="left:1px;top:533px;width:572px;height:18px;box-shadow:inset 1px 1px 0 #808080,inset -1px -1px 0 #FFFFFF"></div>
<div style="left:575px;top:533px;width:131px;height:18px;box-shadow:inset 1px 1px 0 #808080,inset -1px -1px 0 #FFFFFF"></div>
<div style="left:708px;top:533px;width:83px;height:18px;box-shadow:inset 1px 1px 0 #808080,inset -1px -1px 0 #FFFFFF"></div>
<span id="t47" class="t" style="left:3px;top:536px;color:#000;letter-spacing:-0.105px;">Liest alle Datenträger neu ein.</span>
<div style="left:103px;top:228px;width:178px;height:152px;background:#D4D0C8;box-shadow:inset 1px 1px 0 #D4D0C8,inset -1px -1px 0 #404040,inset 2px 2px 0 #FFFFFF,inset -2px -2px 0 #808080"></div>
<span id="t48" class="t" style="left:122.4px;top:233px;color:#000;letter-spacing:-0.223px;">Aktualisieren</span>
<div style="left:106px;top:248px;width:172px;height:17px;background:#0A246A"></div>
<span id="t49" class="t" style="left:122.4px;top:250px;color:#fff;letter-spacing:-0.071px;">Datenträger neu einlesen</span>
<span id="t50" class="t" style="left:122.4px;top:267px;color:#000;letter-spacing:-0.063px;">Virtuelle Festplatte erstellen</span>
<span id="t51" class="t" style="left:122.4px;top:284px;color:#000;letter-spacing:-0.045px;">Virtuelle Festplatte anfügen</span>
<span id="t52" class="t" style="left:122.4px;top:310px;color:#000;letter-spacing:-0.133px;">Alle Aufgaben</span>
<svg class="i" style="left:268px;top:312px" width="5" height="8"><polygon points="0,0 0,7 3.7,3.5" fill="#000"/></svg>
<span id="t53" class="t" style="left:122.4px;top:336px;color:#000;letter-spacing:-0.229px;">Ansicht</span>
<svg class="i" style="left:268px;top:338px" width="5" height="8"><polygon points="0,0 0,7 3.7,3.5" fill="#000"/></svg>
<span id="t54" class="t" style="left:122.4px;top:362px;color:#000;letter-spacing:-0.451px;">Hilfe</span>
<div style="left:107px;top:302px;width:170px;height:1px;background:#808080"></div>
<div style="left:107px;top:303px;width:170px;height:1px;background:#FFFFFF"></div>
<div style="left:107px;top:328px;width:170px;height:1px;background:#808080"></div>
<div style="left:107px;top:329px;width:170px;height:1px;background:#FFFFFF"></div>
<div style="left:107px;top:354px;width:170px;height:1px;background:#808080"></div>
<div style="left:107px;top:355px;width:170px;height:1px;background:#FFFFFF"></div>
<svg class="i" style="left:-4px;top:240px" width="14" height="22" shape-rendering="crispEdges"><rect x="0" y="0" width="1" height="1" fill="#000"/><rect x="0" y="1" width="1" height="1" fill="#000"/><rect x="1" y="1" width="1" height="1" fill="#000"/><rect x="0" y="2" width="1" height="1" fill="#000"/><rect x="1" y="2" width="1" height="1" fill="#fff"/><rect x="2" y="2" width="1" height="1" fill="#000"/><rect x="0" y="3" width="1" height="1" fill="#000"/><rect x="1" y="3" width="1" height="1" fill="#fff"/><rect x="2" y="3" width="1" height="1" fill="#fff"/><rect x="3" y="3" width="1" height="1" fill="#000"/><rect x="0" y="4" width="1" height="1" fill="#000"/><rect x="1" y="4" width="1" height="1" fill="#fff"/><rect x="2" y="4" width="1" height="1" fill="#fff"/><rect x="3" y="4" width="1" height="1" fill="#fff"/><rect x="4" y="4" width="1" height="1" fill="#000"/><rect x="0" y="5" width="1" height="1" fill="#000"/><rect x="1" y="5" width="1" height="1" fill="#fff"/><rect x="2" y="5" width="1" height="1" fill="#fff"/><rect x="3" y="5" width="1" height="1" fill="#fff"/><rect x="4" y="5" width="1" height="1" fill="#fff"/><rect x="5" y="5" width="1" height="1" fill="#000"/><rect x="0" y="6" width="1" height="1" fill="#000"/><rect x="1" y="6" width="1" height="1" fill="#fff"/><rect x="2" y="6" width="1" height="1" fill="#fff"/><rect x="3" y="6" width="1" height="1" fill="#fff"/><rect x="4" y="6" width="1" height="1" fill="#fff"/><rect x="5" y="6" width="1" height="1" fill="#fff"/><rect x="6" y="6" width="1" height="1" fill="#000"/><rect x="0" y="7" width="1" height="1" fill="#000"/><rect x="1" y="7" width="1" height="1" fill="#fff"/><rect x="2" y="7" width="1" height="1" fill="#fff"/><rect x="3" y="7" width="1" height="1" fill="#fff"/><rect x="4" y="7" width="1" height="1" fill="#fff"/><rect x="5" y="7" width="1" height="1" fill="#fff"/><rect x="6" y="7" width="1" height="1" fill="#fff"/><rect x="7" y="7" width="1" height="1" fill="#000"/><rect x="0" y="8" width="1" height="1" fill="#000"/><rect x="1" y="8" width="1" height="1" fill="#fff"/><rect x="2" y="8" width="1" height="1" fill="#fff"/><rect x="3" y="8" width="1" height="1" fill="#fff"/><rect x="4" y="8" width="1" height="1" fill="#fff"/><rect x="5" y="8" width="1" height="1" fill="#fff"/><rect x="6" y="8" width="1" height="1" fill="#fff"/><rect x="7" y="8" width="1" height="1" fill="#fff"/><rect x="8" y="8" width="1" height="1" fill="#000"/><rect x="0" y="9" width="1" height="1" fill="#000"/><rect x="1" y="9" width="1" height="1" fill="#fff"/><rect x="2" y="9" width="1" height="1" fill="#fff"/><rect x="3" y="9" width="1" height="1" fill="#fff"/><rect x="4" y="9" width="1" height="1" fill="#fff"/><rect x="5" y="9" width="1" height="1" fill="#fff"/><rect x="6" y="9" width="1" height="1" fill="#fff"/><rect x="7" y="9" width="1" height="1" fill="#fff"/><rect x="8" y="9" width="1" height="1" fill="#fff"/><rect x="9" y="9" width="1" height="1" fill="#000"/><rect x="0" y="10" width="1" height="1" fill="#000"/><rect x="1" y="10" width="1" height="1" fill="#fff"/><rect x="2" y="10" width="1" height="1" fill="#fff"/><rect x="3" y="10" width="1" height="1" fill="#fff"/><rect x="4" y="10" width="1" height="1" fill="#fff"/><rect x="5" y="10" width="1" height="1" fill="#fff"/><rect x="6" y="10" width="1" height="1" fill="#fff"/><rect x="7" y="10" width="1" height="1" fill="#fff"/><rect x="8" y="10" width="1" height="1" fill="#fff"/><rect x="9" y="10" width="1" height="1" fill="#fff"/><rect x="10" y="10" width="1" height="1" fill="#000"/><rect x="0" y="11" width="1" height="1" fill="#000"/><rect x="1" y="11" width="1" height="1" fill="#fff"/><rect x="2" y="11" width="1" height="1" fill="#fff"/><rect x="3" y="11" width="1" height="1" fill="#fff"/><rect x="4" y="11" width="1" height="1" fill="#fff"/><rect x="5" y="11" width="1" height="1" fill="#fff"/><rect x="6" y="11" width="1" height="1" fill="#fff"/><rect x="7" y="11" width="1" height="1" fill="#fff"/><rect x="8" y="11" width="1" height="1" fill="#fff"/><rect x="9" y="11" width="1" height="1" fill="#fff"/><rect x="10" y="11" width="1" height="1" fill="#fff"/><rect x="11" y="11" width="1" height="1" fill="#000"/><rect x="0" y="12" width="1" height="1" fill="#000"/><rect x="1" y="12" width="1" height="1" fill="#fff"/><rect x="2" y="12" width="1" height="1" fill="#fff"/><rect x="3" y="12" width="1" height="1" fill="#fff"/><rect x="4" y="12" width="1" height="1" fill="#fff"/><rect x="5" y="12" width="1" height="1" fill="#fff"/><rect x="6" y="12" width="1" height="1" fill="#fff"/><rect x="7" y="12" width="1" height="1" fill="#fff"/><rect x="8" y="12" width="1" height="1" fill="#000"/><rect x="9" y="12" width="1" height="1" fill="#000"/><rect x="10" y="12" width="1" height="1" fill="#000"/><rect x="11" y="12" width="1" height="1" fill="#000"/><rect x="12" y="12" width="1" height="1" fill="#000"/><rect x="0" y="13" width="1" height="1" fill="#000"/><rect x="1" y="13" width="1" height="1" fill="#fff"/><rect x="2" y="13" width="1" height="1" fill="#fff"/><rect x="3" y="13" width="1" height="1" fill="#fff"/><rect x="4" y="13" width="1" height="1" fill="#000"/><rect x="5" y="13" width="1" height="1" fill="#000"/><rect x="6" y="13" width="1" height="1" fill="#fff"/><rect x="7" y="13" width="1" height="1" fill="#fff"/><rect x="8" y="13" width="1" height="1" fill="#fff"/><rect x="9" y="13" width="1" height="1" fill="#000"/><rect x="0" y="14" width="1" height="1" fill="#000"/><rect x="1" y="14" width="1" height="1" fill="#fff"/><rect x="2" y="14" width="1" height="1" fill="#fff"/><rect x="3" y="14" width="1" height="1" fill="#000"/><rect x="6" y="14" width="1" height="1" fill="#000"/><rect x="7" y="14" width="1" height="1" fill="#fff"/><rect x="8" y="14" width="1" height="1" fill="#fff"/><rect x="9" y="14" width="1" height="1" fill="#000"/><rect x="0" y="15" width="1" height="1" fill="#000"/><rect x="1" y="15" width="1" height="1" fill="#fff"/><rect x="2" y="15" width="1" height="1" fill="#000"/><rect x="6" y="15" width="1" height="1" fill="#000"/><rect x="7" y="15" width="1" height="1" fill="#fff"/><rect x="8" y="15" width="1" height="1" fill="#fff"/><rect x="9" y="15" width="1" height="1" fill="#fff"/><rect x="10" y="15" width="1" height="1" fill="#000"/><rect x="0" y="16" width="1" height="1" fill="#000"/><rect x="1" y="16" width="1" height="1" fill="#000"/><rect x="6" y="16" width="1" height="1" fill="#000"/><rect x="7" y="16" width="1" height="1" fill="#fff"/><rect x="8" y="16" width="1" height="1" fill="#fff"/><rect x="9" y="16" width="1" height="1" fill="#fff"/><rect x="10" y="16" width="1" height="1" fill="#000"/><rect x="0" y="17" width="1" height="1" fill="#000"/><rect x="7" y="17" width="1" height="1" fill="#000"/><rect x="8" y="17" width="1" height="1" fill="#fff"/><rect x="9" y="17" width="1" height="1" fill="#fff"/><rect x="10" y="17" width="1" height="1" fill="#000"/><rect x="7" y="18" width="1" height="1" fill="#000"/><rect x="8" y="18" width="1" height="1" fill="#fff"/><rect x="9" y="18" width="1" height="1" fill="#fff"/><rect x="10" y="18" width="1" height="1" fill="#fff"/><rect x="11" y="18" width="1" height="1" fill="#000"/><rect x="8" y="19" width="1" height="1" fill="#000"/><rect x="9" y="19" width="1" height="1" fill="#fff"/><rect x="10" y="19" width="1" height="1" fill="#fff"/><rect x="11" y="19" width="1" height="1" fill="#000"/><rect x="8" y="20" width="1" height="1" fill="#000"/><rect x="9" y="20" width="1" height="1" fill="#fff"/><rect x="10" y="20" width="1" height="1" fill="#fff"/><rect x="11" y="20" width="1" height="1" fill="#000"/><rect x="9" y="21" width="1" height="1" fill="#000"/><rect x="10" y="21" width="1" height="1" fill="#000"/></svg>
</body></html>
